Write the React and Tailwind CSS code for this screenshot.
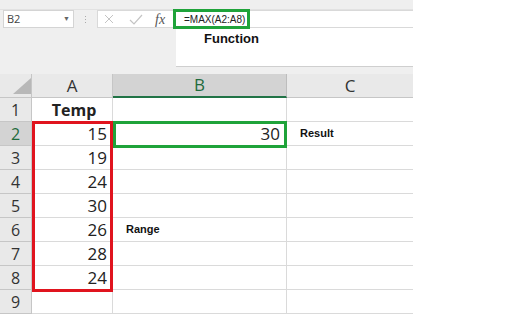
import React from 'react';

const rows = [
  { n: 1, a: 'Temp', bold: true },
  { n: 2, a: '15' },
  { n: 3, a: '19' },
  { n: 4, a: '24' },
  { n: 5, a: '30' },
  { n: 6, a: '26' },
  { n: 7, a: '28' },
  { n: 8, a: '24' },
  { n: 9, a: '' },
];

export default function App() {
  return (
    <div className="w-[512px] h-[314px] overflow-hidden bg-white relative font-['Open_Sans','Liberation_Sans',sans-serif] text-[#222]">
      {/* top toolbar strip */}
      <div className="h-[67px] w-[413px] bg-[#efefef] flex flex-col">
        <div className="h-[10px] border-b border-[#e2e2e2]" />
        <div className="flex h-[18px]">
          <div className="ml-[3px] w-[71px] h-[18px] bg-white border border-[#d4d4d4] flex items-center justify-between pl-[3px] pr-[3px]">
            <span className="text-[11px] text-[#444]">B2</span>
            <span className="text-[7px] text-[#666]">▼</span>
          </div>
          <div className="w-[23px] flex items-center justify-center">
            <div className="flex flex-col gap-[2px]">
              <span className="w-[1px] h-[1px] bg-[#aaa]" />
              <span className="w-[1px] h-[1px] bg-[#aaa]" />
              <span className="w-[1px] h-[1px] bg-[#aaa]" />
            </div>
          </div>
          <div className="flex-1 h-[18px] bg-white border border-[#d9d9d9] border-r-0 flex items-center">
            <svg width="80" height="18" viewBox="0 0 80 18" className="shrink-0">
              <path d="M7 5 L15 13 M15 5 L7 13" stroke="#c4c4c4" strokeWidth="1" fill="none" />
              <path d="M32 10 L36 14 L44 5" stroke="#c4c4c4" strokeWidth="1.2" fill="none" />
            </svg>
          </div>
        </div>
        <div className="flex flex-1">
          <div className="w-[176px]" />
          <div className="flex-1 bg-white border-b border-[#cfcfcf] flex justify-start">
            <span className="ml-[28px] mt-[1px] text-[13px] font-bold font-['Liberation_Sans',sans-serif] text-[#111]">Function</span>
          </div>
        </div>
      </div>

      {/* fx label */}
      <span className="absolute left-[155px] top-[9px] text-[14px] italic font-['Liberation_Serif',serif] text-[#555]">fx</span>

      {/* formula box */}
      <div className="absolute left-[173px] top-[9px] w-[77px] h-[20px] border-[3px] border-[#1fa33a] bg-white flex items-center">
        <span className="ml-[8px] text-[10px] text-[#222] font-['Liberation_Sans',sans-serif]">=MAX(A2:A8)</span>
      </div>

      {/* sheet */}
      <div className="bg-[#efefef] h-[7px] w-[413px]" />
      <div className="grid grid-cols-[32px_81px_174px_126px] w-[413px]">
        <div className="h-[24px] bg-[#e9e9e9] border-r border-b border-[#c6c6c6] relative">
          <svg width="22" height="18" className="absolute left-[10px] top-[3px]">
            <polygon points="21,1 21,17 3,17" fill="#b8b8b8" />
          </svg>
        </div>
        <div className="h-[24px] bg-[#e9e9e9] border-r border-b border-[#c6c6c6] flex items-center justify-center text-[17px] text-[#333]">A</div>
        <div className="h-[24px] bg-[#d3d3d3] border-r border-b-2 border-r-[#bdbdbd] border-b-[#217346] flex items-center justify-center text-[17px] text-[#1e6b3c]">B</div>
        <div className="h-[24px] bg-[#e9e9e9] border-b border-[#c6c6c6] flex items-center justify-center text-[17px] text-[#333]">C</div>

        {rows.map(r => (
          <React.Fragment key={r.n}>
            <div className={`h-[24px] border-r border-b border-[#c6c6c6] flex items-center justify-center text-[16px] ${r.n === 2 ? 'bg-[#d3d3d3] text-[#1e6b3c]' : 'bg-[#e9e9e9] text-[#333]'}`}>{r.n}</div>
            <div className={`h-[24px] border-r border-b border-[#dadada] flex items-center text-[#222] ${r.bold ? 'justify-center font-bold text-[16px] pl-[4px]' : 'justify-end pr-[5px] text-[17px]'}`}>{r.a}</div>
            <div className="h-[24px] border-r border-b border-[#dadada] flex items-center">
              {r.n === 2 && <span className="ml-auto mr-[6px] text-[17px] text-[#222]">30</span>}
              {r.n === 6 && <span className="ml-[13px] text-[11px] font-bold font-['Liberation_Sans',sans-serif] text-[#111]">Range</span>}
            </div>
            <div className="h-[24px] border-b border-[#dadada] flex items-center">
              {r.n === 2 && <span className="ml-[13px] text-[11px] font-bold font-['Liberation_Sans',sans-serif] text-[#111]">Result</span>}
            </div>
          </React.Fragment>
        ))}
      </div>

      {/* range outline */}
      <div className="absolute left-[32px] top-[121px] w-[81px] h-[171px] border-[3px] border-[#e0141e] pointer-events-none" />
      {/* selected cell */}
      <div className="absolute left-[113px] top-[121px] w-[174px] h-[27px] border-[3px] border-[#1fa33a] pointer-events-none" />
    </div>
  );
}
